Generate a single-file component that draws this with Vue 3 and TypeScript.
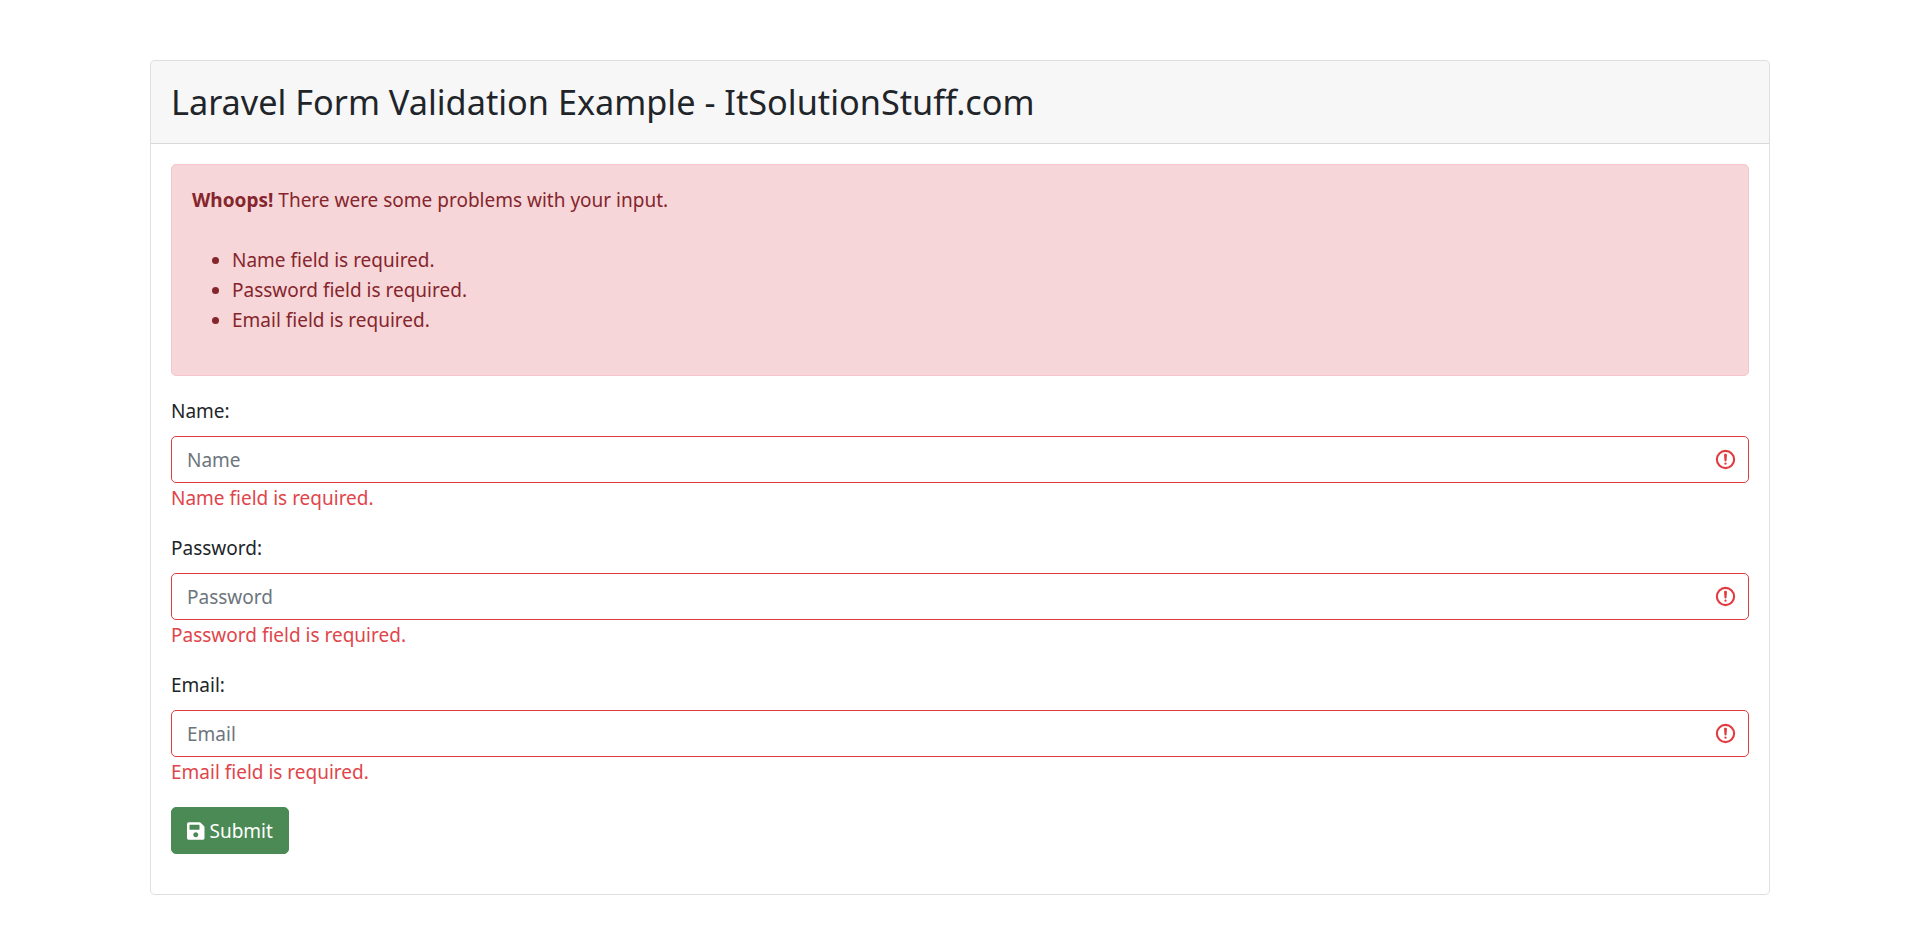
<script setup lang="ts">
interface Field { label: string; type: string; placeholder: string; error: string }
const fields: Field[] = [
  { label: 'Name:', type: 'text', placeholder: 'Name', error: 'Name field is required.' },
  { label: 'Password:', type: 'password', placeholder: 'Password', error: 'Password field is required.' },
  { label: 'Email:', type: 'text', placeholder: 'Email', error: 'Email field is required.' },
]
</script>

<template>
  <div class="page">
    <div class="card">
      <div class="card-header"><h2>Laravel Form Validation Example - ItSolutionStuff.com</h2></div>
      <form class="card-body" @submit.prevent>
        <div class="alert">
          <div><strong>Whoops!</strong> There were some problems with your input.</div>
          <br />
          <ul>
            <li v-for="f in fields" :key="f.label">{{ f.error }}</li>
          </ul>
        </div>
        <div v-for="f in fields" :key="f.label" class="group">
          <label>{{ f.label }}</label>
          <div class="input-wrap">
            <input :type="f.type" :placeholder="f.placeholder" />
            <svg class="invalid" viewBox="0 0 12 12" fill="none" stroke="#e03c40" stroke-width="1.1">
              <circle cx="6" cy="6" r="4.5" />
              <path stroke-linejoin="round" d="M5.8 3.6h.4L6 6.5z" />
              <circle cx="6" cy="8.2" r=".6" fill="#e03c40" stroke="none" />
            </svg>
          </div>
          <span class="error">{{ f.error }}</span>
        </div>
        <div class="actions">
          <button type="submit">
            <svg class="save" viewBox="0 0 448 512" fill="currentColor">
              <path d="M433.941 129.941l-83.882-83.882A48 48 0 0 0 316.118 32H48C21.49 32 0 53.49 0 80v352c0 26.51 21.49 48 48 48h352c26.51 0 48-21.49 48-48V163.882a48 48 0 0 0-14.059-33.941zM224 416c-35.346 0-64-28.654-64-64 0-35.346 28.654-64 64-64s64 28.654 64 64c0 35.346-28.654 64-64 64zm96-304.52V212c0 6.627-5.373 12-12 12H76c-6.627 0-12-5.373-12-12V108c0-6.627 5.373-12 12-12h228.52c3.183 0 6.235 1.264 8.485 3.515l3.48 3.48A11.996 11.996 0 0 1 320 111.48z" />
            </svg>
            <span>Submit</span>
          </button>
        </div>
      </form>
    </div>
  </div>
</template>

<style>
html, body { background: #fff; }
</style>

<style scoped>
.page {
  padding: 60px 150px 38px;
  font-family: "Noto Sans", "Open Sans", sans-serif;
  font-size: 19px;
  line-height: 30px;
  color: #212529;
  box-sizing: border-box;
}
.card {
  border: 1px solid rgba(0, 0, 0, 0.125);
  border-radius: 5px;
  background: #fff;
}
.card-header {
  height: 82px;
  display: flex;
  align-items: center;
  padding: 0 20px;
  background: rgba(0, 0, 0, 0.03);
  border-bottom: 1px solid rgba(0, 0, 0, 0.125);
  border-radius: 4px 4px 0 0;
  box-sizing: content-box;
}
h2 {
  margin: 0;
  font-size: 34.25px;
  font-weight: 400;
  line-height: 42px;
}
.card-body { display: block; padding: 20px 20px 0; }
.alert {
  padding: 20px;
  margin-bottom: 20px;
  background: #f6d6d9;
  border: 1px solid #f5c6cb;
  border-radius: 5px;
  color: #85252c;
}
.alert strong { font-weight: 700; }
ul { margin: 0 0 20px; padding-left: 40px; }
.group { margin-bottom: 20px; }
label { display: block; margin-bottom: 10px; }
.input-wrap { position: relative; }
input {
  display: block;
  width: 100%;
  height: 47px;
  box-sizing: border-box;
  padding: 7.5px 15px;
  border: 1px solid #e03c40;
  border-radius: 5px;
  font: inherit;
  color: #212529;
  background: #fff;
  outline: none;
}
input::placeholder { color: #6c757d; opacity: 1; }
.invalid {
  position: absolute;
  right: 12px;
  top: 12px;
  width: 23px;
  height: 23px;
}
.error { display: block; color: #e0454a; }
.actions { padding-bottom: 40px; }
button {
  display: inline-flex;
  align-items: center;
  gap: 5px;
  height: 47px;
  width: 118px;
  box-sizing: border-box;
  padding: 0 15px;
  border: 1px solid #4a8a54;
  border-radius: 5px;
  background: #4b8a55;
  color: #fff;
  font: inherit;
  cursor: pointer;
}
.save { width: 17.5px; height: 20px; flex: none; }
</style>
